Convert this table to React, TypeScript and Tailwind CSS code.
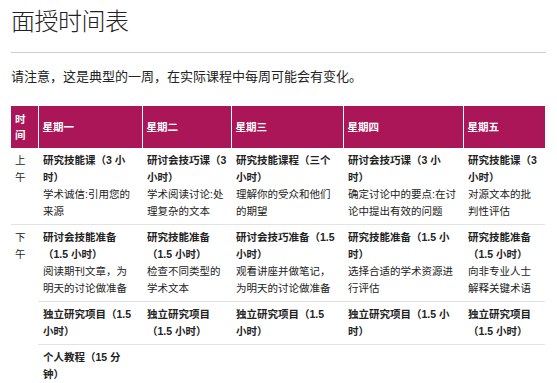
import React from 'react'

type Cell = { title: string[]; desc?: string[] }

const days = ['星期一', '星期二', '星期三', '星期四', '星期五']

const morning: Cell[] = [
    { title: ['研究技能课（3 小', '时）'], desc: ['学术诚信:引用您的', '来源'] },
    { title: ['研讨会技巧课（3', '小时）'], desc: ['学术阅读讨论:处', '理复杂的文本'] },
    { title: ['研究技能课程（三个', '小时）'], desc: ['理解你的受众和他们', '的期望'] },
    { title: ['研讨会技巧课（3 小', '时）'], desc: ['确定讨论中的要点:在讨', '论中提出有效的问题'] },
    { title: ['研究技能课（3', '小时）'], desc: ['对源文本的批', '判性评估'] }
]

const afternoon: Cell[][] = [
    [
        { title: ['研讨会技能准备', '（1.5 小时）'], desc: ['阅读期刊文章，为', '明天的讨论做准备'] },
        { title: ['研究技能准备', '（1.5 小时）'], desc: ['检查不同类型的', '学术文本'] },
        { title: ['研讨会技巧准备（1.5', '小时）'], desc: ['观看讲座并做笔记，', '为明天的讨论做准备'] },
        { title: ['研究技能准备（1.5 小', '时）'], desc: ['选择合适的学术资源进', '行评估'] },
        { title: ['研究技能准备', '（1.5 小时）'], desc: ['向非专业人士', '解释关键术语'] }
    ],
    [
        { title: ['独立研究项目（1.5', '小时）'] },
        { title: ['独立研究项目', '（1.5 小时）'] },
        { title: ['独立研究项目（1.5', '小时）'] },
        { title: ['独立研究项目（1.5 小', '时）'] },
        { title: ['独立研究项目', '（1.5 小时）'] }
    ],
    [{ title: ['个人教程（15 分', '钟）'] }]
]

function Lines({ lines, bold }: { lines: string[]; bold?: boolean }) {
    return (
        <div className={bold ? 'font-bold' : ''}>
            {lines.map((l, i) => (
                <div key={i} className="whitespace-nowrap">
                    {l}
                </div>
            ))}
        </div>
    )
}

function DayCell({ cell, border }: { cell?: Cell; border: boolean }) {
    return (
        <td
            className={`align-top px-[5px] py-[4px] ${border ? 'border-b border-[#e2e2e2]' : ''}`}>
            {cell && (
                <>
                    <Lines lines={cell.title} bold />
                    {cell.desc && <Lines lines={cell.desc} />}
                </>
            )}
        </td>
    )
}

export default function App() {
    return (
        <div
            className="px-[11px] text-[#222] bg-white"
            style={{ fontFamily: '"Liberation Sans", "Noto Sans CJK SC", sans-serif' }}>
            <h1 className="pt-[8px] text-[24px] leading-[28px] font-light tracking-[-0.5px]">
                面授时间表
            </h1>
            <hr className="mt-[16px] border-t border-[#cfcfcf]" />
            <p className="mt-[15px] text-[13px] leading-[18px]">
                请注意，这是典型的一周，在实际课程中每周可能会有变化。
            </p>
            <table className="mt-[20px] w-[534px] table-fixed text-[10.5px] leading-[17px]">
                <colgroup>
                    <col className="w-[27px]" />
                    <col className="w-[104px]" />
                    <col className="w-[89px]" />
                    <col className="w-[112px]" />
                    <col className="w-[120px]" />
                    <col className="w-[82px]" />
                </colgroup>
                <thead>
                    <tr className="bg-[#aa1657] text-white font-bold">
                        <th className="text-left align-middle pl-[4px] pr-[2px] py-[5px] leading-[16px]">
                            时间
                        </th>
                        {days.map(d => (
                            <th
                                key={d}
                                className="text-left align-middle border-l border-white px-[4px] py-[5px] leading-[16px]">
                                {d}
                            </th>
                        ))}
                    </tr>
                </thead>
                <tbody>
                    <tr>
                        <td className="align-top pl-[4px] py-[4px] border-b border-[#e2e2e2]">
                            上<br />午
                        </td>
                        {morning.map((c, i) => (
                            <DayCell key={i} cell={c} border />
                        ))}
                    </tr>
                    {afternoon.map((row, r) => (
                        <tr key={r}>
                            {r === 0 && (
                                <td rowSpan={3} className="align-top pl-[4px] py-[4px]">
                                    下<br />午
                                </td>
                            )}
                            {[0, 1, 2, 3, 4].map(i => (
                                <DayCell key={i} cell={row[i]} border={r < 2} />
                            ))}
                        </tr>
                    ))}
                </tbody>
            </table>
        </div>
    )
}
